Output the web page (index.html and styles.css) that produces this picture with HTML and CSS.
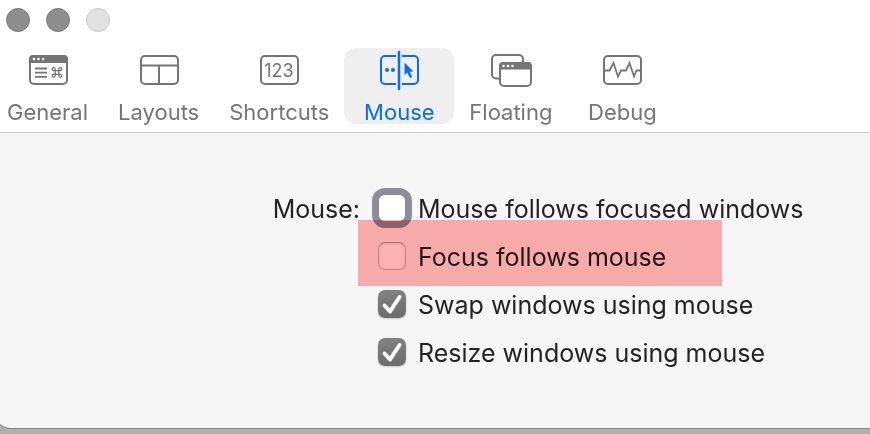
FILE: index.html
```html
<!DOCTYPE html>
<html lang="en">
<head>
    <meta charset="UTF-8">
    <title>Mouse</title>
    <link rel="stylesheet" href="styles.css">
</head>
<body>
    <div class="window">
        <header class="toolbar">
            <div class="lights">
                <button class="light" aria-label="Close"></button>
                <button class="light" aria-label="Minimize"></button>
                <button class="light light-off" aria-label="Zoom" disabled></button>
            </div>
            <nav class="tabs">
                <button class="tab">
                    <svg class="icon" width="44" height="44" viewBox="0 0 44 44">
                        <rect x="4" y="8" width="37" height="28" rx="4"/>
                        <path class="solid" d="M3 15V11a4 4 0 0 1 4-4h31a4 4 0 0 1 4 4v4z"/>
                        <g class="hole"><circle cx="8" cy="11" r="1.3"/><circle cx="12.500" cy="11" r="1.3"/><circle cx="17" cy="11" r="1.3"/></g>
                        <path class="thin" d="M9 20.500h12M9 24.700h12M9 28.900h12"/>
                        <path class="fine" d="M29.200 22.700h3.600v3.600h-3.600zM29.200 22.700h-1.500a1.500 1.500 0 1 1 1.500-1.500zM32.800 22.700v-1.500a1.500 1.500 0 1 1 1.500 1.500zM32.800 26.300h1.500a1.500 1.500 0 1 1-1.500 1.500zM29.200 26.300v1.500a1.500 1.500 0 1 1-1.500-1.500z"/>
                    </svg>
                    <span>General</span>
                </button>
                <button class="tab">
                    <svg class="icon" width="44" height="44" viewBox="0 0 44 44">
                        <rect x="4" y="8" width="37" height="28" rx="4"/>
                        <path d="M4 17.500h37M22 17.500V36"/>
                    </svg>
                    <span>Layouts</span>
                </button>
                <button class="tab">
                    <svg class="icon" width="44" height="44" viewBox="0 0 44 44">
                        <rect x="4" y="8" width="37" height="28" rx="4"/>
                        <text class="digits" x="22" y="29" text-anchor="middle">123</text>
                    </svg>
                    <span>Shortcuts</span>
                </button>
                <button class="tab tab-active">
                    <svg class="icon" width="44" height="44" viewBox="0 0 44 44">
                        <path d="M19 8H8a4 4 0 0 0-4 4v20a4 4 0 0 0 4 4h11M25 8h12a4 4 0 0 1 4 4v20a4 4 0 0 1-4 4H25"/>
                        <path class="bar" d="M22 4v37"/>
                        <circle class="solid" cx="10" cy="22" r="2"/>
                        <circle class="solid" cx="16" cy="22" r="2"/>
                        <path class="solid" d="M27.500 14.500v12.500l2.800-2.400 2.700 5.500 2.200-1-2.500-5.400 3.800-.3z"/>
                    </svg>
                    <span>Mouse</span>
                </button>
                <button class="tab">
                    <svg class="icon" width="44" height="44" viewBox="0 0 44 44">
                        <path d="M11 30.500H7a4 4 0 0 1-4-4V11a4 4 0 0 1 4-4h23a4 4 0 0 1 4 4v3"/>
                        <rect x="11" y="15" width="31" height="23" rx="4"/>
                        <path class="solid" d="M10 21.500V18a4 4 0 0 1 4-4h25a4 4 0 0 1 4 4v3.500z"/>
                        <g class="hole"><circle cx="14.500" cy="18" r="1.3"/><circle cx="19" cy="18" r="1.3"/><circle cx="23.500" cy="18" r="1.3"/></g>
                    </svg>
                    <span>Floating</span>
                </button>
                <button class="tab">
                    <svg class="icon" width="44" height="44" viewBox="0 0 44 44">
                        <rect x="4" y="8" width="37" height="28" rx="4"/>
                        <path class="thin" d="M5 22.500h4.500l4-7.500 4.500 13.500 3-6h5l3.500-7.500 4.500 13.500 2.500-6H40"/>
                    </svg>
                    <span>Debug</span>
                </button>
            </nav>
        </header>

        <main class="form">
            <div class="form-label" id="mouse-label">Mouse:</div>
            <div class="options" role="group" aria-labelledby="mouse-label">
                <label class="option">
                    <span class="check">
                        <input type="checkbox" class="focused">
                    </span>
                    Mouse follows focused windows
                </label>
                <label class="option option-marked">
                    <span class="check">
                        <input type="checkbox">
                    </span>
                    Focus follows mouse
                </label>
                <label class="option">
                    <span class="check">
                        <input type="checkbox" checked>
                        <svg class="tick" viewBox="0 0 28 28"><path d="M6.500 15.500l5.500 6L21.500 7"/></svg>
                    </span>
                    Swap windows using mouse
                </label>
                <label class="option">
                    <span class="check">
                        <input type="checkbox" checked>
                        <svg class="tick" viewBox="0 0 28 28"><path d="M6.500 15.500l5.500 6L21.500 7"/></svg>
                    </span>
                    Resize windows using mouse
                </label>
            </div>
        </main>
    </div>
</body>
</html>
```
FILE: styles.css
```css
* {
    box-sizing: border-box;
}
body {
    margin: 0;
    min-height: 100vh;
    overflow: hidden;
    background-color: #b0b0b0;
    font-family: Inter, "Liberation Sans", sans-serif;
    color: #242424;
}
.window {
    min-height: calc(100vh - 6px);
    margin-left: -8px;
    background-color: #f6f6f6;
    border-bottom-left-radius: 20px;
    box-shadow: 0 1px 0 #888;
}
.toolbar {
    padding: 8px 0;
    background-color: #fff;
    border-bottom: 1px solid #cdcdcd;
}
.lights {
    display: flex;
    gap: 16px;
    padding-left: 14px;
}
.light {
    width: 24px;
    height: 24px;
    padding: 0;
    border: 1px solid #7a7a7a;
    border-radius: 50%;
    background-color: #8e8e8e;
}
.light-off {
    border-color: #c8c8c8;
    background-color: #e1e1e1;
}
.tabs {
    display: flex;
    margin-top: 16px;
}
.tab {
    display: flex;
    flex-direction: column;
    align-items: center;
    flex: none;
    min-width: 110px;
    height: 76px;
    padding: 0 15px;
    border: none;
    border-radius: 12px;
    background: none;
    color: #757575;
    font-family: inherit;
    font-size: 22px;
    line-height: 28px;
}
.tab span {
    margin-top: 6px;
}
.tab-active {
    background-color: #efefef;
    color: #0a6cf5;
}
.icon {
    flex: none;
    fill: none;
    stroke: currentColor;
    stroke-width: 2;
}
.icon .solid {
    fill: currentColor;
    stroke: none;
}
.icon .hole {
    fill: #fff;
    stroke: none;
}
.icon .thin {
    stroke-width: 1.8;
}
.icon .fine {
    stroke-width: 1.3;
}
.icon .bar {
    stroke-width: 2.5;
    stroke-linecap: round;
}
.icon .digits {
    fill: currentColor;
    stroke: none;
    font-size: 18px;
}
.form {
    display: grid;
    grid-template-columns: 368px 1fr;
    column-gap: 18px;
    padding: 61px 0 40px;
    font-size: 25px;
    line-height: 30px;
}
.form-label {
    text-align: right;
}
.options {
    display: flex;
    flex-direction: column;
    align-items: flex-start;
    gap: 18px;
}
.option {
    position: relative;
    display: flex;
    gap: 12px;
    white-space: nowrap;
}
/* pink marker laid over the row */
.option-marked::after {
    content: "";
    position: absolute;
    top: -22px;
    left: -20px;
    width: 364px;
    height: 66px;
    background-color: #ffb0b0;
    mix-blend-mode: multiply;
    pointer-events: none;
}
.check {
    display: grid;
    width: 28px;
    height: 28px;
}
.check input,
.tick {
    grid-area: 1 / 1;
    width: 28px;
    height: 28px;
    margin: 0;
}
.check input {
    appearance: none;
    border: 1px solid #c2c2c2;
    border-top-color: #a8a8a8;
    border-radius: 7px;
    background-color: #fff;
    box-shadow: inset 0 1px 3px rgba(0,0,0,0.12);
}
.check input:checked {
    border: none;
    background: linear-gradient(#828282, #6c6c6c);
    box-shadow: 0 1px 2px rgba(0,0,0,0.2);
}
.check input.focused {
    border-color: #8e8c96;
    box-shadow: 0 0 0 6px #8e8c96;
}
.tick {
    position: relative;
    fill: none;
    stroke: #fff;
    stroke-width: 4;
    stroke-linecap: round;
    stroke-linejoin: round;
    pointer-events: none;
}
```
